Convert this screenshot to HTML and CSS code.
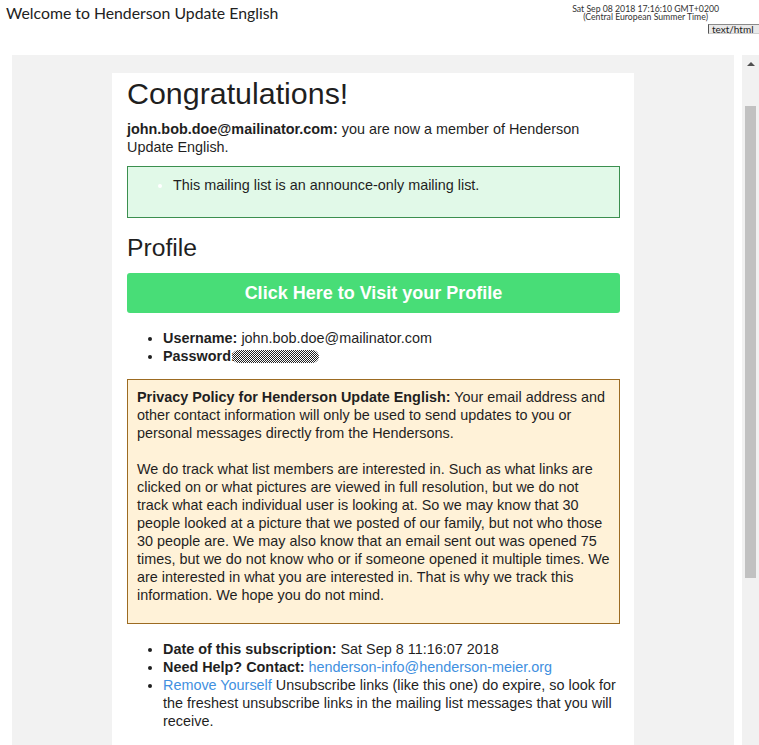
FILE: index.html
```html
<!DOCTYPE html>
<html>

<head>
	<meta http-equiv="Content-Type" content="text/html; charset=utf-8"/>
	<title>Welcome to Henderson Update English</title>
	<link rel="stylesheet" href="styles.css">
</head>

<body>
<header class="topbar">
	<h1 class="list-title">Welcome to Henderson Update English</h1>
	<div class="meta">
		<div class="stamp">Sat Sep 08 2018 17:16:10 GMT+0200<br/>(Central European Summer Time)</div>
		<div class="mime">text/html</div>
	</div>
</header>
<div class="viewer">
	<div class="frame">
		<div class="mail">
			<h1>Congratulations!</h1>
			<p class="intro"><b>john.bob.doe@mailinator.com:</b> you are now a member of Henderson Update English.</p>
			<div class="notice">
				<ul>
					<li>This mailing list is an announce-only mailing list.</li>
				</ul>
			</div>
			<h2>Profile</h2>
			<a class="profile-btn" href="#">Click Here to Visit your Profile</a>
			<ul class="facts">
				<li><b>Username:</b> john.bob.doe@mailinator.com</li>
				<li><b>Password:</b><span class="secret"></span></li>
			</ul>
			<div class="privacy">
				<p><b>Privacy Policy for Henderson Update English:</b> Your email address and other contact information will only be used to send updates to you or personal messages directly from the Hendersons.</p>
				<p>We do track what list members are interested in. Such as what links are clicked on or what pictures are viewed in full resolution, but we do not track what each individual user is looking at. So we may know that 30 people looked at a picture that we posted of our family, but not who those 30 people are. We may also know that an email sent out was opened 75 times, but we do not know who or if someone opened it multiple times. We are interested in what you are interested in. That is why we track this information. We hope you do not mind.</p>
			</div>
			<ul class="facts">
				<li><b>Date of this subscription:</b> Sat Sep 8 11:16:07 2018</li>
				<li><b>Need Help? Contact:</b> <a href="#">henderson-info@henderson-meier.org</a></li>
				<li><a href="#">Remove Yourself</a> Unsubscribe links (like this one) do expire, so look for the freshest unsubscribe links in the mailing list messages that you will receive.</li>
			</ul>
		</div>
	</div>
	<div class="scrollbar">
		<span class="arrow"></span>
		<span class="thumb"></span>
	</div>
</div>
</body>

</html>
```

FILE: styles.css
```css
html,
body {
    margin: 0;
    overflow: hidden;
    background: #fff;
}

body {
    font-family: Lato, "Liberation Sans", sans-serif;
    color: #1f1f1f;
}

/* header of the archive viewer */
.topbar {
    display: flex;
    height: 55px;
}

.list-title {
    font-size: 15.8px;
    font-weight: normal;
    line-height: 20px;
    margin: 3px 0 0 6px;
    color: #222;
}

.meta {
    margin-left: auto;
    display: flex;
    flex-direction: column;
    align-items: flex-end;
}

.stamp {
    font-size: 8.7px;
    line-height: 8px;
    text-align: center;
    color: #333;
    margin: 5px 40px 0 0;
}

.mime {
    width: 47px;
    font-size: 10px;
    line-height: 8px;
    padding: 0 0 0 3px;
    margin-top: 3px;
    background: #e9e9e9;
    border-top: 1px solid #8a8a8a;
    border-left: 1px solid #555;
    border-bottom: 1px solid #d0d0d0;
    color: #222;
}

/* message frame */
.viewer {
    display: flex;
    gap: 8px;
    padding-left: 12px;
}

.frame {
    width: 722px;
    height: 690px;
    background: #f2f2f2;
    overflow: hidden;
}

.scrollbar {
    width: 17px;
    height: 690px;
    background: #f1f1f1;
    display: flex;
    flex-direction: column;
    align-items: center;
}

.scrollbar .arrow {
    width: 0;
    height: 0;
    margin-top: 7px;
    border-left: 4px solid transparent;
    border-right: 4px solid transparent;
    border-bottom: 4px solid #505050;
}

.scrollbar .thumb {
    width: 11px;
    height: 472px;
    margin-top: 40px;
    background: #c1c1c1;
}

/* the mail itself */
.mail {
    width: 493px;
    margin: 18px 0 0 100px;
    padding: 0 14px 40px 15px;
    background: #fff;
    font-family: "Liberation Sans", Arial, sans-serif;
    font-size: 14.4px;
    line-height: 18px;
    color: #1f1f1f;
}

.mail h1 {
    font-size: 30.4px;
    font-weight: normal;
    line-height: 34px;
    margin: 0;
    padding-top: 3px;
}

.mail .intro {
    margin: 10px 0;
}

.notice {
    border: 1px solid #3b8f4f;
    background: #e1f9e8;
    padding: 9px 9px 0;
}

.notice ul {
    margin: 0 0 23px;
    padding-left: 36px;
}

.notice li::marker {
    color: #fff;
}

.mail h2 {
    font-size: 24.7px;
    font-weight: normal;
    line-height: 28px;
    margin: 16px 0 11px;
}

.profile-btn {
    display: block;
    padding: 10px 0;
    line-height: 20px;
    font-size: 18px;
    font-weight: bold;
    text-align: center;
    color: #fff;
    text-decoration: none;
    background: #48dd77;
    border-radius: 3px;
}

.facts {
    margin: 16px 0 14px;
    padding-left: 36px;
}

.mail a:not(.profile-btn) {
    color: #4190e0;
    text-decoration: none;
}

.secret {
    display: inline-block;
    width: 87px;
    height: 13px;
    margin-left: -4px;
    vertical-align: -2px;
    border-radius: 7px;
    background: repeating-conic-gradient(#222 0 25%, #fff 0 50%) 0 0 / 2px 2px;
}

.privacy {
    border: 1px solid #9c6b22;
    background: #fff2d8;
    padding: 8px 9px 19px;
}

.privacy p {
    margin: 0;
}

.privacy p + p {
    margin-top: 18px;
}
```
